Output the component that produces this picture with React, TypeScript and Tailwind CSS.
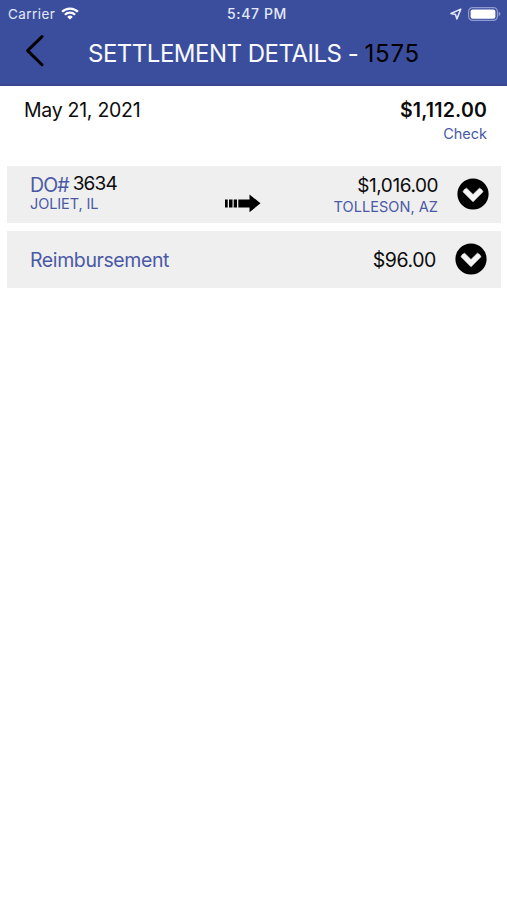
import React from 'react';

function WifiIcon() {
  return (
    <svg viewBox="0 0 18 13" className="w-[18px] h-[13px]" fill="none" stroke="#fff" strokeWidth="2.3">
      <path d="M1.1 4.8A11.3 11.3 0 0 1 16.9 4.8" />
      <path d="M3.9 7.8A7.2 7.2 0 0 1 14.1 7.8" />
      <path d="M6.2 9.9A4 4 0 0 1 11.8 9.9L9 12.6Z" fill="#fff" stroke="none" />
    </svg>
  );
}

function StatusBar() {
  return (
    <div className="h-7 grid grid-cols-3 items-center pl-2 pr-[6px] text-[#e4e9fa] text-[13.5px] leading-7">
      <div className="flex items-center gap-[6px]">
        <span className="tracking-[0.45px]">Carrier</span>
        <div className="-mt-px">
          <WifiIcon />
        </div>
      </div>
      <span className="text-center font-medium tracking-[0.6px] text-[14px] pl-[5px]">5:47 PM</span>
      <div className="flex items-center justify-end gap-[6px] -mt-px">
        <svg viewBox="0 0 12 12" className="w-3 h-3" fill="none" stroke="#e4e9fa" strokeWidth="1.5" strokeLinejoin="round">
          <path d="M10.8 1.1L1 5.5L5.5 6.5L6.9 10.9Z" />
        </svg>
        <svg viewBox="0 0 33 14" className="w-[33px] h-[14px]">
          <rect x="0.6" y="0.6" width="28.8" height="12.8" rx="4" fill="none" stroke="#8f9bd0" strokeWidth="1.2" />
          <rect x="2.6" y="2.4" width="24.8" height="9.4" rx="2.2" fill="#fff" />
          <path d="M30.6 4.8Q32.4 5.4 32.4 7T30.6 9.2Z" fill="#8f9bd0" />
        </svg>
      </div>
    </div>
  );
}

function Header() {
  return (
    <header className="h-[86px] bg-[#3b4e9e] border-b-2 border-[#38458f]">
      <StatusBar />
      <div className="flex h-[52px] pl-[25px]">
        <svg viewBox="0 0 20 34" className="w-5 h-[34px] mt-[6px]" fill="none" stroke="#000" strokeWidth="3" strokeLinecap="round" strokeLinejoin="round">
          <path d="M17 2.6L2.6 16.6L17 30.8" />
        </svg>
        <h1 className="ml-[43px] text-[24px] leading-[52px] whitespace-pre text-[#f8faff]">
          <span className="tracking-[-0.5px]">SETTLEMENT DETAILS - </span>
          <span className="text-black tracking-[0.8px]">1575</span>
        </h1>
      </div>
    </header>
  );
}

function ExpandIcon() {
  return (
    <svg viewBox="0 0 32 32" className="w-8 h-8 shrink-0">
      <circle cx="16" cy="16" r="15.6" fill="#000" />
      <path
        d="M7.3 11.6L9.6 10.2L16 16.5L22.4 10.2L24.7 11.6L26 13.8L16 23.8L6 13.8Z"
        fill="#f4f4f4"
        stroke="#f4f4f4"
        strokeWidth="0.6"
        strokeLinejoin="round"
      />
    </svg>
  );
}

function RouteArrow() {
  return (
    <svg viewBox="0 0 37 19" className="w-[37px] h-[19px]">
      <path d="M1 5.5H3.7V13.5H1ZM5 5.5H8.5V13.5H5ZM9.7 5.5H13V13.5H9.7ZM14.3 5.5H25.5V0.5L36.5 9.3L25.5 18.3V13.5H14.3Z" />
    </svg>
  );
}

export default function App() {
  return (
    <div className="min-h-screen bg-white text-[#0c0c0c] font-['Inter','Liberation_Sans',sans-serif]">
      <Header />

      <section className="h-20 flex justify-between pl-6 pr-5 pt-3">
        <div className="text-[19.5px] leading-6 tracking-[-0.28px]">May 21, 2021</div>
        <div className="text-right">
          <div className="text-[19.5px] leading-6 font-semibold tracking-[0.18px]">$1,112.00</div>
          <div className="text-[14.5px] leading-6 text-[#4959a6]">Check</div>
        </div>
      </section>

      <main className="flex flex-col gap-2 pl-[7px] pr-[6px]">
        <div className="h-[57px] bg-[#efefef] flex pl-[23px] pr-[12px]">
          <div className="w-[194px] pt-[7px] text-[#4959a6]">
            <div className="flex text-[19.5px] leading-6">
              <span className="tracking-[-0.9px]">DO#</span>
              <span className="-mt-px ml-[4px] text-[19px] tracking-[-0.8px] text-[#0c0c0c]">3634</span>
            </div>
            <div className="text-[14.5px] leading-[14px] tracking-[-0.1px]">JOLIET, IL</div>
          </div>
          <div className="pt-[28px]">
            <RouteArrow />
          </div>
          <div className="flex-1 text-right pt-[8px]">
            <div className="text-[19px] leading-6 tracking-[-0.45px]">$1,016.00</div>
            <div className="text-[14.5px] leading-[17px] tracking-[0.05px] text-[#4959a6]">TOLLESON, AZ</div>
          </div>
          <div className="ml-[19px] pt-[12px]">
            <ExpandIcon />
          </div>
        </div>

        <div className="h-[57px] bg-[#efefef] flex items-center pl-[23px] pr-[14px] text-[19.5px]">
          <span className="pt-[2px] tracking-[-0.4px] text-[#4959a6]">Reimbursement</span>
          <span className="pt-[2px] ml-auto mr-[19px] tracking-[-0.4px]">$96.00</span>
          <div className="-mt-px">
            <ExpandIcon />
          </div>
        </div>
      </main>
    </div>
  );
}
